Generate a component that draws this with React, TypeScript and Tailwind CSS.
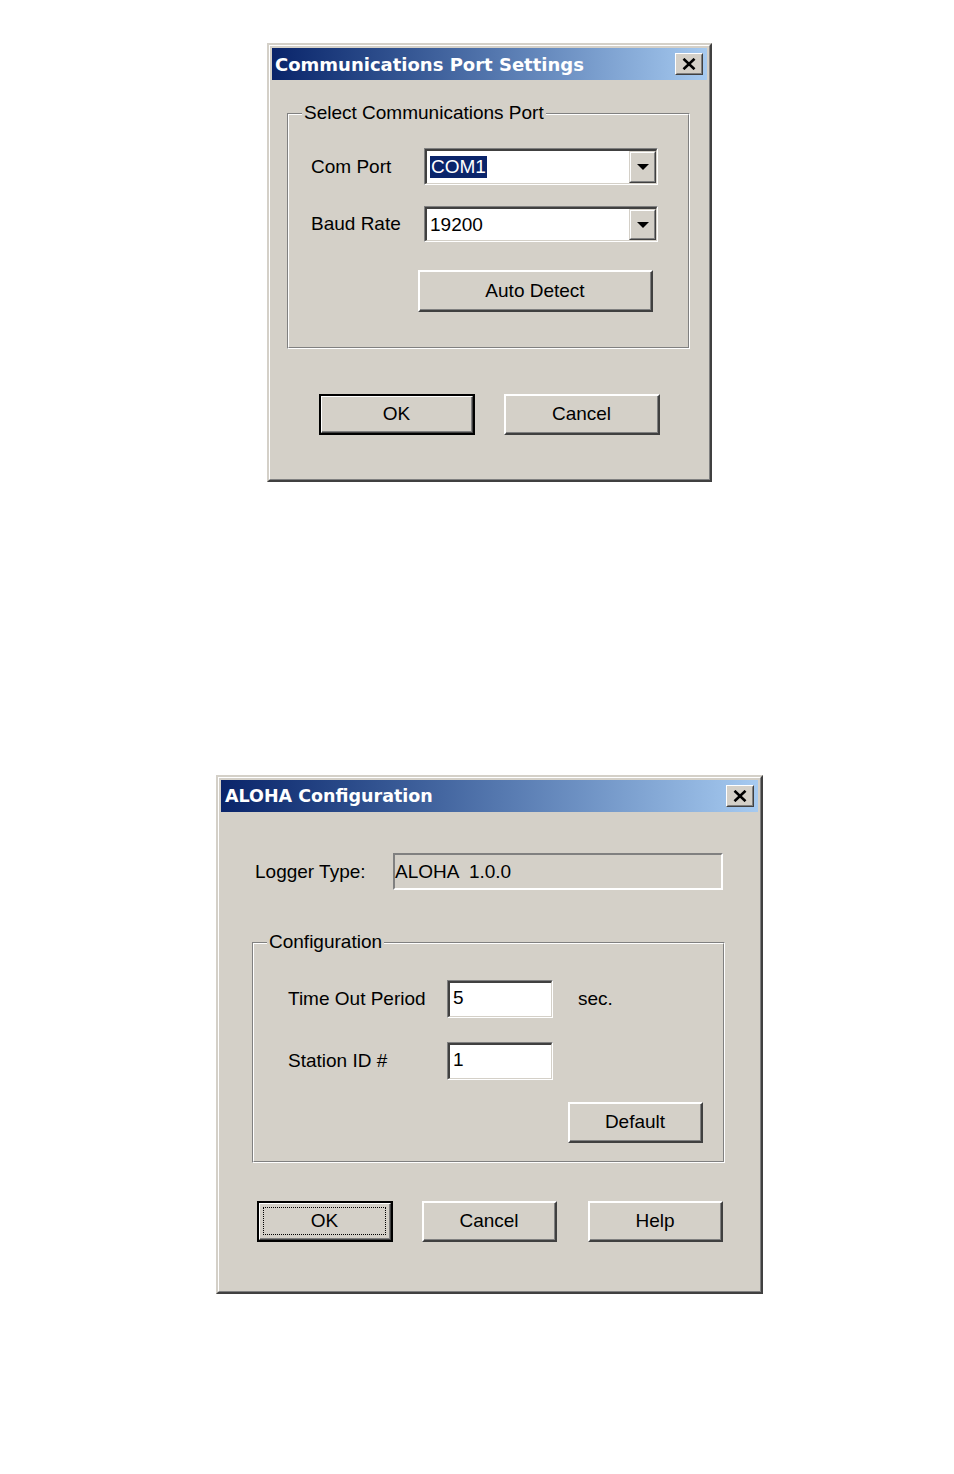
import React from 'react';

const body = "font-['Liberation_Sans',Arial,sans-serif] text-[19px] leading-[22px] text-black";

function CloseBox() {
  return (
    <div className="mr-[4px] h-[22px] w-[28px] border border-t-white border-l-white border-r-[#404040] border-b-[#404040] bg-[#d4d0c8]">
      <div className="flex h-full w-full items-center justify-center border border-t-[#d4d0c8] border-l-[#d4d0c8] border-r-[#808080] border-b-[#808080]">
        <svg width="14" height="12" viewBox="0 0 14 12">
          <path d="M1.5 0.8 L12.5 11.2 M12.5 0.8 L1.5 11.2" stroke="#000" strokeWidth="2.6" />
        </svg>
      </div>
    </div>
  );
}

function Window({
  className,
  title,
  titleClass,
  children,
}: {
  className: string;
  title: string;
  titleClass: string;
  children: React.ReactNode;
}) {
  return (
    <div
      className={`${className} border-2 border-t-[#d4d0c8] border-l-[#d4d0c8] border-r-[#404040] border-b-[#404040] bg-[#d4d0c8]`}
    >
      <div className="flex h-full flex-col border border-t-white border-l-white border-r-[#808080] border-b-[#808080] p-[2px]">
        <div className="flex h-[32px] shrink-0 items-center justify-between bg-linear-to-r from-[#0a246a] to-[#a6caf0]">
          <span className={`${titleClass} font-['DejaVu_Sans',Verdana,sans-serif] font-bold text-white`}>{title}</span>
          <CloseBox />
        </div>
        <div className={`flex flex-1 flex-col ${body}`}>{children}</div>
      </div>
    </div>
  );
}

function Button({ label, className }: { label: string; className: string }) {
  return (
    <div className={`${className} flex border-t-2 border-l-2 border-r-2 border-b-2 border-t-white border-l-white border-r-[#404040] border-b-[#404040]`}>
      <div className="flex flex-1 items-center justify-center border-r border-b border-r-[#808080] border-b-[#808080]">
        {label}
      </div>
    </div>
  );
}

function DefaultButton({ label, className, focused }: { label: string; className: string; focused?: boolean }) {
  return (
    <div className={`${className} flex border-2 border-black`}>
      <div className="flex flex-1 border border-t-white border-l-white border-r-[#404040] border-b-[#404040]">
        <div className="flex flex-1 border-r border-b border-r-[#808080] border-b-[#808080] p-[3px]">
          {focused ? (
            <div className="flex flex-1 items-center justify-center border border-dotted border-black">{label}</div>
          ) : (
            <div className="flex flex-1 items-center justify-center">{label}</div>
          )}
        </div>
      </div>
    </div>
  );
}

function GroupBox({
  label,
  className,
  children,
}: {
  label: string;
  className: string;
  children: React.ReactNode;
}) {
  return (
    <div className={`${className} relative border border-t-[#808080] border-l-[#808080] border-r-white border-b-white`}>
      <div className="flex h-full flex-col border border-t-white border-l-white border-r-[#808080] border-b-[#808080]">
        {children}
      </div>
      <span className="absolute left-[14px] top-[-12px] bg-[#d4d0c8] px-[2px]">{label}</span>
    </div>
  );
}

function DropArrow() {
  return (
    <div className="flex h-full w-[27px] border border-t-[#d4d0c8] border-l-[#d4d0c8] border-r-[#404040] border-b-[#404040] bg-[#d4d0c8]">
      <div className="flex flex-1 items-center justify-center border border-t-white border-l-white border-r-[#808080] border-b-[#808080]">
        <svg width="12" height="6" viewBox="0 0 12 6">
          <polygon points="0,0 12,0 6,6" fill="#000" />
        </svg>
      </div>
    </div>
  );
}

function Combo({ value, className, selected }: { value: string; className: string; selected?: boolean }) {
  return (
    <div className={`${className} border border-t-[#808080] border-l-[#808080] border-r-white border-b-white`}>
      <div className="flex h-full border-t-2 border-l-2 border-r border-b border-t-[#404040] border-l-[#404040] border-r-[#d4d0c8] border-b-[#d4d0c8] bg-white">
        <div className="flex flex-1 items-center pl-[3px]">
          {selected ? <span className="bg-[#0a246a] px-[1px] text-white">{value}</span> : <span>{value}</span>}
        </div>
        <DropArrow />
      </div>
    </div>
  );
}

function Edit({ value, className }: { value: string; className: string }) {
  return (
    <div className={`${className} border border-t-[#808080] border-l-[#808080] border-r-white border-b-white`}>
      <div className="flex h-full items-center border-t-2 border-l-2 border-r border-b border-t-[#404040] border-l-[#404040] border-r-[#d4d0c8] border-b-[#d4d0c8] bg-white pb-[4px] pl-[3px]">
        {value}
      </div>
    </div>
  );
}

export default function App() {
  return (
    <div className="min-h-[1474px] w-full bg-white pt-[43px]">
      {/* Communications port dialog */}
      <Window
        className="ml-[267px] h-[439px] w-[445px]"
        title="Communications Port Settings"
        titleClass="pl-[3px] text-[18px]"
      >
        <GroupBox label="Select Communications Port" className="ml-[15px] mt-[33px] h-[236px] w-[403px]">
          <div className="mt-[33px] flex items-center pl-[22px]">
            <span className="w-[113px]">Com Port</span>
            <Combo value="COM1" selected className="h-[37px] w-[234px]" />
          </div>
          <div className="mt-[21px] flex items-center pl-[22px]">
            <span className="w-[113px]">Baud Rate</span>
            <Combo value="19200" className="h-[36px] w-[234px]" />
          </div>
          <Button label="Auto Detect" className="ml-[129px] mt-[28px] h-[42px] w-[235px]" />
        </GroupBox>
        <div className="mt-[45px] flex">
          <DefaultButton label="OK" className="ml-[47px] h-[41px] w-[156px]" />
          <Button label="Cancel" className="ml-[29px] h-[41px] w-[156px]" />
        </div>
      </Window>

      {/* ALOHA configuration dialog */}
      <Window
        className="ml-[216px] mt-[293px] h-[519px] w-[547px]"
        title="ALOHA Configuration"
        titleClass="pl-[4px] text-[17.5px]"
      >
        <div className="mt-[41px] flex items-center pl-[34px]">
          <span className="w-[138px]">Logger Type:</span>
          <div className="flex h-[37px] w-[330px] items-center whitespace-pre border-2 border-t-[#808080] border-l-[#808080] border-r-white border-b-white">
            {'ALOHA  1.0.0'}
          </div>
        </div>
        <GroupBox label="Configuration" className="ml-[31px] mt-[52px] h-[221px] w-[473px]">
          <div className="mt-[36px] flex items-center pl-[34px]">
            <span className="w-[159px]">Time Out Period</span>
            <Edit value="5" className="h-[38px] w-[106px]" />
            <span className="ml-[25px]">sec.</span>
          </div>
          <div className="mt-[24px] flex items-center pl-[34px]">
            <span className="w-[159px]">Station ID #</span>
            <Edit value="1" className="h-[38px] w-[106px]" />
          </div>
          <Button label="Default" className="ml-[314px] mt-[22px] h-[41px] w-[135px]" />
        </GroupBox>
        <div className="mt-[38px] flex">
          <DefaultButton label="OK" focused className="ml-[36px] h-[41px] w-[136px]" />
          <Button label="Cancel" className="ml-[29px] h-[41px] w-[135px]" />
          <Button label="Help" className="ml-[31px] h-[41px] w-[135px]" />
        </div>
      </Window>
    </div>
  );
}
